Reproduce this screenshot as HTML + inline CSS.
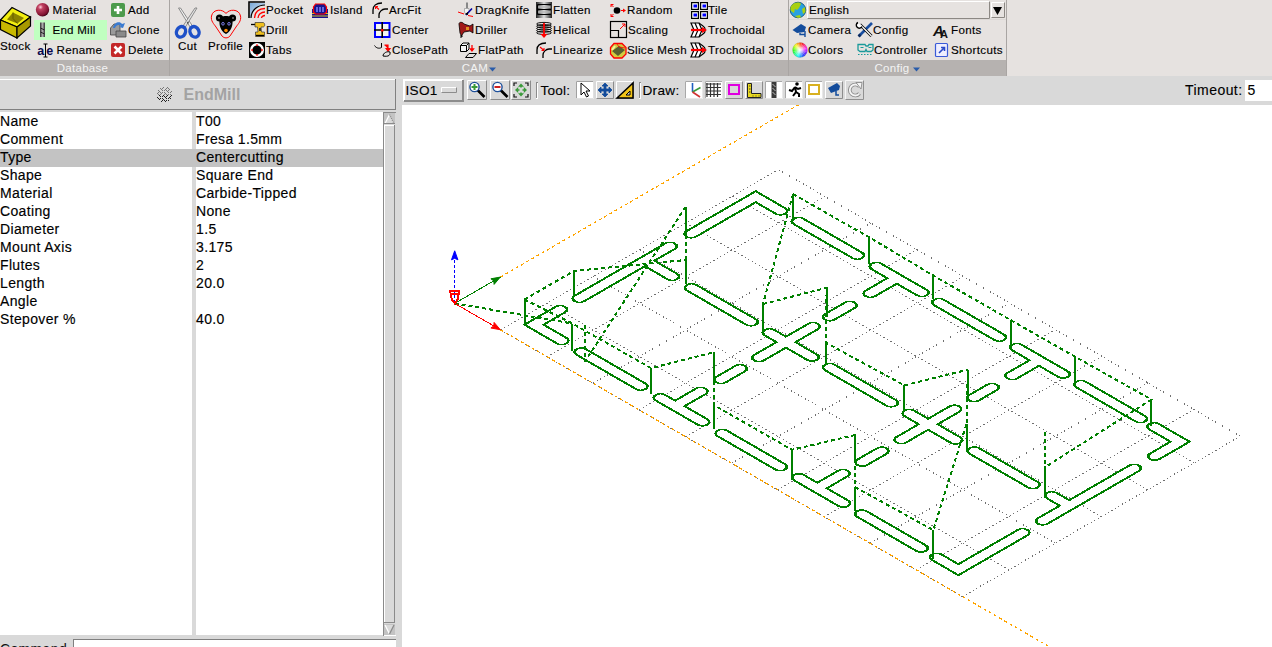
<!DOCTYPE html>
<html><head><meta charset="utf-8"><style>html,body{margin:0;padding:0;width:1272px;height:647px;overflow:hidden;background:#d9d9d9}</style></head>
<body><svg width="1272" height="647" viewBox="0 0 1272 647" font-family="Liberation Sans, sans-serif" style="position:absolute;left:0;top:0">
<rect x="0" y="0" width="1272" height="647" fill="#d9d9d9" />
<rect x="0" y="0" width="1007" height="76" fill="#e6e2e0" />
<rect x="1007" y="0" width="265" height="76" fill="#e6e2e0" />
<rect x="0" y="60" width="169" height="16" fill="#b6b2b0" />
<rect x="170" y="60" width="618" height="16" fill="#b6b2b0" />
<rect x="789" y="60" width="217" height="16" fill="#b6b2b0" />
<rect x="169" y="0" width="1" height="76" fill="#a9a5a3" />
<rect x="788" y="0" width="1" height="76" fill="#a9a5a3" />
<rect x="1006" y="0" width="1" height="76" fill="#a9a5a3" />
<text x="82.5" y="72" font-size="11.5" fill="#f4f4f4" font-weight="normal" letter-spacing="0.3" text-anchor="middle">Database</text>
<text x="475" y="72" font-size="11.5" fill="#f4f4f4" font-weight="normal" letter-spacing="0.3" text-anchor="middle">CAM</text>
<path d="M489 67.5h7l-3.5 4z" fill="#2a5caa"/>
<text x="892" y="72" font-size="11.5" fill="#f4f4f4" font-weight="normal" letter-spacing="0.3" text-anchor="middle">Config</text>
<path d="M913 67.5h7l-3.5 4z" fill="#2a5caa"/>
<rect x="34" y="20" width="73" height="20" fill="#c0ffc0" />
<text x="52.5" y="14" font-size="11.6" fill="#000" letter-spacing="0.32" stroke="#000" stroke-width="0.14">Material</text>
<text x="52.5" y="34" font-size="11.6" fill="#000" letter-spacing="0.22" stroke="#000" stroke-width="0.14">End Mill</text>
<text x="56.5" y="54" font-size="11.6" fill="#000" letter-spacing="0.32" stroke="#000" stroke-width="0.14">Rename</text>
<text x="128" y="14" font-size="11.6" fill="#000" letter-spacing="0.32" stroke="#000" stroke-width="0.14">Add</text>
<text x="128" y="34" font-size="11.6" fill="#000" letter-spacing="0.32" stroke="#000" stroke-width="0.14">Clone</text>
<text x="128" y="54" font-size="11.6" fill="#000" letter-spacing="0.32" stroke="#000" stroke-width="0.14">Delete</text>
<text x="0" y="50" font-size="11.6" fill="#000" letter-spacing="0.32" stroke="#000" stroke-width="0.14">Stock</text>
<text x="178" y="50" font-size="11.6" fill="#000" letter-spacing="0.32" stroke="#000" stroke-width="0.14">Cut</text>
<text x="208" y="50" font-size="11.6" fill="#000" letter-spacing="0.32" stroke="#000" stroke-width="0.14">Profile</text>
<text x="266" y="14" font-size="11.6" fill="#000" letter-spacing="0.32" stroke="#000" stroke-width="0.14">Pocket</text>
<text x="266" y="34" font-size="11.6" fill="#000" letter-spacing="0.32" stroke="#000" stroke-width="0.14">Drill</text>
<text x="266" y="54" font-size="11.6" fill="#000" letter-spacing="0.32" stroke="#000" stroke-width="0.14">Tabs</text>
<text x="330" y="14" font-size="11.6" fill="#000" letter-spacing="0.32" stroke="#000" stroke-width="0.14">Island</text>
<text x="389" y="14" font-size="11.6" fill="#000" letter-spacing="0.32" stroke="#000" stroke-width="0.14">ArcFit</text>
<text x="392" y="34" font-size="11.6" fill="#000" letter-spacing="0.32" stroke="#000" stroke-width="0.14">Center</text>
<text x="392" y="54" font-size="11.6" fill="#000" letter-spacing="0.32" stroke="#000" stroke-width="0.14">ClosePath</text>
<text x="475" y="14" font-size="11.6" fill="#000" letter-spacing="0.32" stroke="#000" stroke-width="0.14">DragKnife</text>
<text x="475" y="34" font-size="11.6" fill="#000" letter-spacing="0.32" stroke="#000" stroke-width="0.14">Driller</text>
<text x="478" y="54" font-size="11.6" fill="#000" letter-spacing="0.32" stroke="#000" stroke-width="0.14">FlatPath</text>
<text x="553" y="14" font-size="11.6" fill="#000" letter-spacing="0.32" stroke="#000" stroke-width="0.14">Flatten</text>
<text x="553" y="34" font-size="11.6" fill="#000" letter-spacing="0.32" stroke="#000" stroke-width="0.14">Helical</text>
<text x="553" y="54" font-size="11.6" fill="#000" letter-spacing="0.32" stroke="#000" stroke-width="0.14">Linearize</text>
<text x="627" y="14" font-size="11.6" fill="#000" letter-spacing="0.32" stroke="#000" stroke-width="0.14">Random</text>
<text x="628" y="34" font-size="11.6" fill="#000" letter-spacing="0.32" stroke="#000" stroke-width="0.14">Scaling</text>
<text x="627" y="54" font-size="11.6" fill="#000" letter-spacing="0.32" stroke="#000" stroke-width="0.14">Slice Mesh</text>
<text x="708" y="14" font-size="11.6" fill="#000" letter-spacing="0.32" stroke="#000" stroke-width="0.14">Tile</text>
<text x="708" y="34" font-size="11.6" fill="#000" letter-spacing="0.32" stroke="#000" stroke-width="0.14">Trochoidal</text>
<text x="708" y="54" font-size="11.6" fill="#000" letter-spacing="0.32" stroke="#000" stroke-width="0.14">Trochoidal 3D</text>
<text x="808" y="34" font-size="11.6" fill="#000" letter-spacing="0.32" stroke="#000" stroke-width="0.14">Camera</text>
<text x="873" y="34" font-size="11.6" fill="#000" letter-spacing="0.32" stroke="#000" stroke-width="0.14">Config</text>
<text x="951" y="34" font-size="11.6" fill="#000" letter-spacing="0.32" stroke="#000" stroke-width="0.14">Fonts</text>
<text x="808" y="54" font-size="11.6" fill="#000" letter-spacing="0.32" stroke="#000" stroke-width="0.14">Colors</text>
<text x="874" y="54" font-size="11.6" fill="#000" letter-spacing="0.32" stroke="#000" stroke-width="0.14">Controller</text>
<text x="951" y="54" font-size="11.6" fill="#000" letter-spacing="0.32" stroke="#000" stroke-width="0.14">Shortcuts</text>
<rect x="807" y="1" width="183" height="18" fill="#ffffff" opacity="0"/>
<rect x="807.5" y="1.5" width="182" height="17" fill="#e6e2e0" stroke="#ffffff" stroke-width="1"/>
<path d="M807.5 18.5V1.5H989.5" fill="none" stroke="#ffffff"/>
<path d="M807.5 18.5H989.5V1.5" fill="none" stroke="#8c8884"/>
<text x="809" y="14" font-size="11.6" fill="#000" letter-spacing="0.32" stroke="#000" stroke-width="0.14">English</text>
<rect x="991" y="2" width="14" height="16" fill="#e6e2e0"/><path d="M991.5,17.5V2.5H1004.5" stroke="#ffffff" fill="none"/><path d="M991.5,17.5H1004.5V2.5" stroke="#8c8884" fill="none"/>
<rect x="789" y="19" width="217" height="1" fill="#dcd8d6" />
<path d="M993 7h9l-4.5 8z" fill="#000"/>
<defs><radialGradient id="gball" cx="0.35" cy="0.3" r="0.75"><stop offset="0" stop-color="#ffd0dc"/><stop offset="0.25" stop-color="#c04060"/><stop offset="0.8" stop-color="#801030"/><stop offset="1" stop-color="#300010"/></radialGradient><linearGradient id="gbit" x1="0" x2="1"><stop offset="0" stop-color="#333"/><stop offset="0.5" stop-color="#aaa"/><stop offset="1" stop-color="#333"/></linearGradient><linearGradient id="gflat" x1="0" x2="1"><stop offset="0" stop-color="#222"/><stop offset="0.5" stop-color="#ddd"/><stop offset="1" stop-color="#222"/></linearGradient><radialGradient id="gcol" cx="0.5" cy="0.5" r="0.5"><stop offset="0" stop-color="#fff"/><stop offset="1" stop-color="#fff" stop-opacity="0"/></radialGradient><linearGradient id="gcol2" x1="0" y1="0" x2="1" y2="1"><stop offset="0" stop-color="#ff40ff"/><stop offset="0.3" stop-color="#4060ff"/><stop offset="0.55" stop-color="#40e0ff"/><stop offset="0.8" stop-color="#60ff40"/><stop offset="1" stop-color="#ffff40"/></linearGradient><linearGradient id="gpock" x1="0" y1="0" x2="1" y2="1"><stop offset="0" stop-color="#7aa8d8"/><stop offset="1" stop-color="#f0f4f8"/></linearGradient></defs>
<path d="M0.5,20L12,7.5L30.5,17L17,27Z" fill="#f2ee10" stroke="#000" stroke-width="1.2"/>
<path d="M0.5,20V29.5L17,38L17,27Z" fill="#c8b800" stroke="#000" stroke-width="1.2"/>
<path d="M17,27V38L30.5,26V17Z" fill="#a89800" stroke="#000" stroke-width="1.2"/>
<path d="M7,19.5L13,12.5L24,18L17.5,23.5Z" fill="#8a8000"/>
<path d="M13,12.5V18.5L17.5,23.5" stroke="#5a5400" stroke-width="0.8" fill="none"/>
<circle cx="42.5" cy="9.8" r="6.7" fill="url(#gball)"/>
<rect x="40" y="22.5" width="5" height="14.5" fill="url(#gbit)"/>
<path d="M40.5,28l4,2M40.5,32l4,2" stroke="#222" stroke-width="1"/>
<text x="37.3" y="54.5" font-size="12.5" font-weight="bold" fill="#0a0a50">a</text>
<text x="46.3" y="54.5" font-size="12.5" font-weight="bold" fill="#0a0a50">e</text>
<path d="M45.5,44V57M43.5,44H47.5M43.5,57H47.5" stroke="#000" stroke-width="1"/>
<rect x="111" y="3" width="14" height="14" rx="2" fill="#4c9a4c"/>
<path d="M118,6V14M114,10H122" stroke="#fff" stroke-width="2.6"/>
<rect x="111" y="43" width="14" height="14" rx="2" fill="#c42828"/>
<path d="M114.5,46.5L121.5,53.5M121.5,46.5L114.5,53.5" stroke="#fff" stroke-width="2.6"/>
<path d="M110.5,35V28L114,24H120V35Z" fill="#9a9a9a" stroke="#444" stroke-width="0.8"/>
<path d="M116,37V31H126V37Z" fill="#8a8a8a" stroke="#444" stroke-width="0.8"/>
<path d="M113,28C114,22 120,21 122,24L125,23L123,28L119,27L121,26C119,24 116,25 115,28Z" fill="#3a7ad0"/>
<path d="M178.5,8L180.5,8L193.5,27.5L191,28.5Z" fill="#f0f0f0" stroke="#808080" stroke-width="0.9"/>
<path d="M197,8L195,8L182,27.5L184.5,28.5Z" fill="#e4e4e4" stroke="#808080" stroke-width="0.9"/>
<circle cx="187.8" cy="22.8" r="1" fill="#555"/>
<ellipse cx="181" cy="31.8" rx="4.4" ry="5.4" transform="rotate(25 181 31.8)" fill="none" stroke="#1e50c8" stroke-width="3.4"/>
<ellipse cx="194.5" cy="31.8" rx="4.4" ry="5.4" transform="rotate(-25 194.5 31.8)" fill="none" stroke="#1e50c8" stroke-width="3.4"/>
<path d="M179,33l2,-4M192.5,29.5l2,4" stroke="#cfe0ff" stroke-width="1"/>
<path d="M226,13.5C223,9 213,8.5 211.5,16C210.5,21 214,24 216,27L222,36C224,38.5 228,38.5 230,36L236,27C238,24 241.5,21 240.5,16C239,8.5 229,9 226,13.5Z" fill="none" stroke="#ff0000" stroke-width="1"/>
<circle cx="219.5" cy="18" r="3.6" fill="#000"/><circle cx="232.5" cy="18" r="3.6" fill="#000"/>
<path d="M219.5,19C219,15 233,15 232.5,19C233,24 232,31 226,34C220,31 219,24 219.5,19Z" fill="#000"/>
<circle cx="219" cy="18" r="1" fill="#777"/><circle cx="233" cy="18" r="1" fill="#777"/>
<circle cx="223" cy="23.8" r="1.3" fill="none" stroke="#8a8aff" stroke-width="0.9"/><circle cx="229" cy="23.8" r="1.3" fill="none" stroke="#8a8aff" stroke-width="0.9"/>
<circle cx="226" cy="30.5" r="1.8" fill="#ff8800"/>
<path d="M249,18V2H265" stroke="#000" stroke-width="1.6" fill="none"/>
<path d="M250,18V3H265V5C258,5 251,10 251,18Z" fill="url(#gpock)"/>
<path d="M251,18C251,10 258,5 265,5" stroke="#000" stroke-width="1.2" fill="none"/>
<path d="M254.5,18C254.5,12 259,8.5 265,8.5M258,18C258,14.5 261,12 265,12M261.5,18C261.5,17 263,15.5 265,15.5" stroke="#ff0000" stroke-width="1.3" fill="none"/>
<path d="M251,24.5H255" stroke="#000" stroke-width="1.3"/>
<path d="M255,22.5H263C265,22.5 265.5,27 263,27H261L261.5,32H264.5V36.5H255.5V32H258L257.5,27H255Z" fill="#f0c020" stroke="#333" stroke-width="0.7"/>
<path d="M256,35.5H264" stroke="#000" stroke-width="1.4"/><path d="M259,28H261V31H259Z" fill="#333"/>
<rect x="249" y="42" width="16" height="16" fill="#000"/>
<circle cx="257" cy="50" r="5.8" fill="none" stroke="#fff" stroke-width="2.4"/>
<path d="M257,44.2V46M257,54V55.8M251.2,50H253M261,50H262.8" stroke="#ff0000" stroke-width="1.4"/>
<rect x="312" y="9" width="16" height="9" fill="#141490"/>
<path d="M312,13.5H328M312,16H328" stroke="#d4c020" stroke-width="1"/>
<path d="M315.5,4H324.5L326.5,7V12L324.5,14H315.5L313.5,12V7Z" fill="#141490" stroke="#ff0000" stroke-width="1.2"/>
<path d="M317,7V12M320,7V12M323,7V12" stroke="#8888ff" stroke-width="1.4"/>
<path d="M373,14V10C373,6 376,3 382,3" stroke="#000" stroke-width="1.3" fill="none"/>
<path d="M379,18V15C379,12 382,9 385,9H388" stroke="#000" stroke-width="1.3" fill="none"/>
<path d="M537,54V50C537,46 540,43 546,43" stroke="#000" stroke-width="1.3" fill="none"/>
<path d="M543,58V55C543,52 546,49 549,49H552" stroke="#000" stroke-width="1.3" fill="none"/>
<path d="M379,9.5L375.5,6.5M375.5,6.5h2.5M375.5,6.5v2.5" stroke="#ff0000" stroke-width="1.1" fill="none"/>
<path d="M540,47L544,50.5M544,50.5h-2.5M544,50.5v-2.5" stroke="#ff0000" stroke-width="1.1" fill="none"/>
<rect x="375" y="23" width="14.5" height="14" fill="#f4f4f0" stroke="#0000ff" stroke-width="2"/>
<path d="M382.2,22V38M374,30H390" stroke="#000" stroke-width="1.6"/>
<rect x="381" y="29" width="2.5" height="2.5" fill="#ff0000"/>
<path d="M374.5,45.5C376,48 379,49 381.5,47.5V43" stroke="#000" stroke-width="1" fill="none"/>
<path d="M384.5,45H388V49M386,48.5L388,51L390,48.5Z" stroke="#ff0000" stroke-width="1.2" fill="#ff0000"/>
<path d="M383,56C383,53 387,51 390,52C390.5,55 389,57 383,56Z" stroke="#000" stroke-width="1" fill="none"/>
<rect x="466" y="2.5" width="2" height="6" fill="#888"/><path d="M464.5,8.5H469V12L466,15L464.5,12Z" fill="#f4f4f4" stroke="#888" stroke-width="0.6"/>
<path d="M466,15L472,8.5" stroke="#0000a0" stroke-width="1.6"/><path d="M465,14L468,12L468,15Z" fill="#000"/>
<path d="M458,12L464,14M468,15.5L473,16.5" stroke="#ff0000" stroke-width="1" fill="none"/>
<path d="M459,24C459,21.5 463,22 464,24L470,26L473,24V33L470,31L464,32L462,35V37L461,35L460,33Z" fill="#a01818" stroke="#000" stroke-width="0.8"/>
<path d="M466,27h3v3h-3z" fill="#e09020"/><path d="M461,35V38" stroke="#000" stroke-width="1"/>
<path d="M460.5,45.5L463,43H469V49L466.5,51.5H460.5ZM460.5,45.5H466.5V51.5M466.5,45.5L469,43" stroke="#000" stroke-width="1" fill="#f4f4f4"/>
<path d="M472,45V50M470.5,49L472,51L473.5,49Z" stroke="#ff0000" stroke-width="1.3" fill="#ff0000"/>
<path d="M465.5,57.5L469,53.5H476.5L473,57.5Z" stroke="#000" stroke-width="1" fill="none"/>
<rect x="536" y="2" width="16" height="16" fill="url(#gflat)"/>
<path d="M537.5,4.5H551M537.5,9.5H551M537.5,14.5H551" stroke="#000" stroke-width="1.2"/>
<path d="M537.5,4.5V14.5" stroke="#000" stroke-width="1.2"/><path d="M538,7H550.5M538,12H550.5" stroke="#bbb" stroke-width="1.5"/>
<ellipse cx="544" cy="24.0" rx="7.5" ry="1.6" fill="none" stroke="#000" stroke-width="0.9"/>
<ellipse cx="544" cy="26.2" rx="7.5" ry="1.6" fill="none" stroke="#000" stroke-width="0.9"/>
<ellipse cx="544" cy="28.4" rx="7.5" ry="1.6" fill="none" stroke="#000" stroke-width="0.9"/>
<ellipse cx="544" cy="30.6" rx="7.5" ry="1.6" fill="none" stroke="#000" stroke-width="0.9"/>
<ellipse cx="544" cy="32.8" rx="7.5" ry="1.6" fill="none" stroke="#000" stroke-width="0.9"/>
<path d="M544,23V35" stroke="#ff0000" stroke-width="1.8"/><path d="M540.5,34L544,38L547.5,34Z" fill="#ff0000"/>
<circle cx="617" cy="10.5" r="3.3" fill="#000"/>
<path d="M613.5,7L611,4.5M611,4.5v2.5M611,4.5h2.5M613.5,14L611,16.5M611,16.5v-2.5M611,16.5h2.5M621,10.5H624" stroke="#ff0000" stroke-width="1" fill="none"/><path d="M623,8.5L626,10.5L623,12.5Z" fill="#ff0000"/>
<rect x="610.5" y="21.5" width="16" height="16" fill="none" stroke="#000" stroke-width="1.2"/>
<path d="M610.5,30.5H618.5V37.5" stroke="#000" stroke-width="1.2" fill="none"/>
<path d="M620,29L625,24M622,24H625V27" stroke="#ff0000" stroke-width="1" fill="none"/>
<path d="M614,43.5H622L626,47.5V54L622,58H614L610.5,54V47.5Z" fill="#d0cc40" stroke="#ff0000" stroke-width="1.3"/>
<path d="M612,51L618,56L625,50L619,46Z" fill="#5a6030"/><path d="M617,44L619,47L625,48" stroke="#ff0000" stroke-width="0.8" fill="none"/><path d="M615,46l-3,4" stroke="#f0f0a0" stroke-width="2"/>
<rect x="691.6" y="2.6" width="6.8" height="6.8" fill="#fff" stroke="#000" stroke-width="1.2"/><rect x="693.5" y="4.5" width="3.5" height="3" fill="#0000ff"/>
<rect x="700.6" y="2.6" width="6.8" height="6.8" fill="#fff" stroke="#000" stroke-width="1.2"/><rect x="702.5" y="4.5" width="3.5" height="3" fill="#0000ff"/>
<rect x="691.6" y="11.6" width="6.8" height="6.8" fill="#fff" stroke="#000" stroke-width="1.2"/><rect x="693.5" y="13.5" width="3.5" height="3" fill="#0000ff"/>
<rect x="700.6" y="11.6" width="6.8" height="6.8" fill="#fff" stroke="#000" stroke-width="1.2"/><rect x="702.5" y="13.5" width="3.5" height="3" fill="#0000ff"/>
<path d="M691,23H699L703,26C706,28 706,32 703,34L699,37H691L694,30Z" fill="#fff" stroke="#000" stroke-width="1.2"/>
<path d="M695,23L698,30L695,37M699,23L702,30L699,37" stroke="#000" stroke-width="1.2" fill="none"/>
<path d="M691,30H703" stroke="#ff0000" stroke-width="2.2"/><path d="M702,27L707,30L702,33Z" fill="#ff0000"/>
<path d="M691,43H699L703,46C706,48 706,52 703,54L699,57H691L694,50Z" fill="#fff" stroke="#000" stroke-width="1.2"/>
<path d="M695,43L698,50L695,57M699,43L702,50L699,57" stroke="#000" stroke-width="1.2" fill="none"/>
<path d="M691,50H703" stroke="#ff0000" stroke-width="2.2"/><path d="M702,47L707,50L702,53Z" fill="#ff0000"/>
<circle cx="798" cy="10" r="7.8" fill="#28a0e0" stroke="#0a4a70" stroke-width="0.8"/>
<path d="M792,5C795,2 800,2 801,4L799,8L797,10L795,9L794,13L791,11C790,9 790,7 792,5Z" fill="#a8d010"/><path d="M802,9L805,7L805.5,12L803,14Z" fill="#a8d010"/><path d="M795,16L800,15L801,17.5C799,18 797,18 795,16Z" fill="#a8d010"/>
<path d="M792.5,30L801,24L806,27L804.5,32L797,33Z" fill="#134c9c"/><path d="M800,33V34.5H805V31.5M805,31V37" stroke="#134c9c" stroke-width="1.4" fill="none"/>
<path d="M800,50L807.40,50.00A7.4,7.4 0 0 0 807.12,47.99Z" fill="#eb00ff"/>
<path d="M800,50L807.15,48.08A7.4,7.4 0 0 0 806.36,46.22Z" fill="#ff00d2"/>
<path d="M800,50L806.41,46.30A7.4,7.4 0 0 0 805.16,44.70Z" fill="#ff0092"/>
<path d="M800,50L805.23,44.77A7.4,7.4 0 0 0 803.62,43.54Z" fill="#ff0052"/>
<path d="M800,50L803.70,43.59A7.4,7.4 0 0 0 801.82,42.83Z" fill="#ff0013"/>
<path d="M800,50L801.92,42.85A7.4,7.4 0 0 0 799.90,42.60Z" fill="#ff2c00"/>
<path d="M800,50L800.00,42.60A7.4,7.4 0 0 0 797.99,42.88Z" fill="#ff6c00"/>
<path d="M800,50L798.08,42.85A7.4,7.4 0 0 0 796.22,43.64Z" fill="#ffac00"/>
<path d="M800,50L796.30,43.59A7.4,7.4 0 0 0 794.70,44.84Z" fill="#ffeb00"/>
<path d="M800,50L794.77,44.77A7.4,7.4 0 0 0 793.54,46.38Z" fill="#d2ff00"/>
<path d="M800,50L793.59,46.30A7.4,7.4 0 0 0 792.83,48.18Z" fill="#92ff00"/>
<path d="M800,50L792.85,48.08A7.4,7.4 0 0 0 792.60,50.10Z" fill="#52ff00"/>
<path d="M800,50L792.60,50.00A7.4,7.4 0 0 0 792.88,52.01Z" fill="#13ff00"/>
<path d="M800,50L792.85,51.92A7.4,7.4 0 0 0 793.64,53.78Z" fill="#00ff2c"/>
<path d="M800,50L793.59,53.70A7.4,7.4 0 0 0 794.84,55.30Z" fill="#00ff6c"/>
<path d="M800,50L794.77,55.23A7.4,7.4 0 0 0 796.38,56.46Z" fill="#00ffac"/>
<path d="M800,50L796.30,56.41A7.4,7.4 0 0 0 798.18,57.17Z" fill="#00ffeb"/>
<path d="M800,50L798.08,57.15A7.4,7.4 0 0 0 800.10,57.40Z" fill="#00d2ff"/>
<path d="M800,50L800.00,57.40A7.4,7.4 0 0 0 802.01,57.12Z" fill="#0092ff"/>
<path d="M800,50L801.92,57.15A7.4,7.4 0 0 0 803.78,56.36Z" fill="#0052ff"/>
<path d="M800,50L803.70,56.41A7.4,7.4 0 0 0 805.30,55.16Z" fill="#0013ff"/>
<path d="M800,50L805.23,55.23A7.4,7.4 0 0 0 806.46,53.62Z" fill="#2c00ff"/>
<path d="M800,50L806.41,53.70A7.4,7.4 0 0 0 807.17,51.82Z" fill="#6c00ff"/>
<path d="M800,50L807.15,51.92A7.4,7.4 0 0 0 807.40,49.90Z" fill="#ac00ff"/>
<circle cx="800" cy="50" r="7.4" fill="url(#gcol)"/>
<circle cx="800" cy="50" r="7.4" fill="none" stroke="#999" stroke-width="0.3"/>
<path d="M859,36L872,23" stroke="#1a4ea0" stroke-width="2.6"/><path d="M858.5,36.5l2,-2" stroke="#0a2a60" stroke-width="2.6"/>
<path d="M860,24.5L871.5,36" stroke="#000" stroke-width="2.8"/><path d="M860,24.5L871.5,36" stroke="#fff" stroke-width="1.2"/>
<path d="M858,22.5a3,3 0 1 0 4,4" stroke="#000" stroke-width="1.4" fill="#fff"/>
<text x="933" y="36" font-size="15" font-weight="bold" fill="#111" font-style="italic">A</text>
<text x="940" y="38" font-size="11" font-weight="bold" fill="#111">A</text>
<path d="M858,44.5H865L866,46H868L869,44.5H873V50L871,51.5H867L866,49.5L865,51.5H860L858,50Z" fill="none" stroke="#1a9a9a" stroke-width="1.3"/>
<path d="M860.5,47.5h3M868.5,47.5h3" stroke="#1a9a9a" stroke-width="1"/><path d="M858,54.5H873" stroke="#1a9a9a" stroke-width="1" stroke-dasharray="1.5,1.5"/>
<rect x="935.5" y="43.5" width="12" height="13" rx="1" fill="#eef" stroke="#3a5ad8" stroke-width="1.2"/>
<path d="M939,53L944.5,47.5M941,47.5H944.5V51" stroke="#2a4ac8" stroke-width="1.6" fill="none"/>
<rect x="0" y="79" width="396" height="1" fill="#ffffff" />
<rect x="0" y="80" width="395" height="29" fill="#d9d9d9" />
<rect x="395" y="79" width="1" height="31" fill="#808080" />
<rect x="0" y="109" width="396" height="1" fill="#808080" />
<text x="183.5" y="100" font-size="16" fill="#a3a3a3" font-weight="bold" text-anchor="start">EndMill</text>
<rect x="157" y="93" width="1" height="1" fill="#777"/><rect x="157" y="97" width="1" height="1" fill="#222"/><rect x="158" y="90" width="1" height="1" fill="#777"/><rect x="158" y="92" width="1" height="1" fill="#777"/><rect x="158" y="94" width="1" height="1" fill="#777"/><rect x="158" y="98" width="1" height="1" fill="#222"/><rect x="159" y="91" width="1" height="1" fill="#777"/><rect x="159" y="95" width="1" height="1" fill="#222"/><rect x="159" y="99" width="1" height="1" fill="#222"/><rect x="160" y="88" width="1" height="1" fill="#777"/><rect x="160" y="92" width="1" height="1" fill="#777"/><rect x="160" y="94" width="1" height="1" fill="#777"/><rect x="160" y="96" width="1" height="1" fill="#222"/><rect x="160" y="98" width="1" height="1" fill="#222"/><rect x="161" y="89" width="1" height="1" fill="#777"/><rect x="161" y="93" width="1" height="1" fill="#777"/><rect x="161" y="101" width="1" height="1" fill="#222"/><rect x="162" y="88" width="1" height="1" fill="#777"/><rect x="162" y="90" width="1" height="1" fill="#777"/><rect x="162" y="92" width="1" height="1" fill="#777"/><rect x="162" y="96" width="1" height="1" fill="#222"/><rect x="162" y="98" width="1" height="1" fill="#222"/><rect x="162" y="100" width="1" height="1" fill="#222"/><rect x="163" y="87" width="1" height="1" fill="#777"/><rect x="163" y="95" width="1" height="1" fill="#222"/><rect x="163" y="99" width="1" height="1" fill="#222"/><rect x="164" y="90" width="1" height="1" fill="#777"/><rect x="164" y="92" width="1" height="1" fill="#777"/><rect x="164" y="94" width="1" height="1" fill="#777"/><rect x="164" y="96" width="1" height="1" fill="#222"/><rect x="164" y="100" width="1" height="1" fill="#222"/><rect x="165" y="89" width="1" height="1" fill="#777"/><rect x="165" y="93" width="1" height="1" fill="#777"/><rect x="165" y="97" width="1" height="1" fill="#222"/><rect x="165" y="101" width="1" height="1" fill="#222"/><rect x="166" y="88" width="1" height="1" fill="#777"/><rect x="166" y="90" width="1" height="1" fill="#777"/><rect x="166" y="94" width="1" height="1" fill="#777"/><rect x="166" y="96" width="1" height="1" fill="#222"/><rect x="166" y="98" width="1" height="1" fill="#222"/><rect x="166" y="100" width="1" height="1" fill="#222"/><rect x="167" y="87" width="1" height="1" fill="#777"/><rect x="167" y="91" width="1" height="1" fill="#777"/><rect x="167" y="95" width="1" height="1" fill="#222"/><rect x="168" y="88" width="1" height="1" fill="#777"/><rect x="168" y="90" width="1" height="1" fill="#777"/><rect x="168" y="92" width="1" height="1" fill="#777"/><rect x="168" y="94" width="1" height="1" fill="#777"/><rect x="168" y="98" width="1" height="1" fill="#222"/><rect x="168" y="100" width="1" height="1" fill="#222"/><rect x="169" y="89" width="1" height="1" fill="#777"/><rect x="169" y="97" width="1" height="1" fill="#222"/><rect x="170" y="92" width="1" height="1" fill="#777"/><rect x="170" y="94" width="1" height="1" fill="#777"/><rect x="170" y="96" width="1" height="1" fill="#222"/><rect x="170" y="98" width="1" height="1" fill="#222"/><rect x="171" y="91" width="1" height="1" fill="#777"/><rect x="171" y="95" width="1" height="1" fill="#222"/>
<rect x="0" y="112" width="383" height="523" fill="#ffffff" />
<rect x="192" y="112" width="4" height="523" fill="#d9d9d9" />
<rect x="0" y="149" width="383" height="18" fill="#c3c3c3" />
<text x="0" y="125.8" font-size="14" fill="#000" font-weight="normal" letter-spacing="0.35" stroke="#000" stroke-width="0.15" text-anchor="start">Name</text>
<text x="196" y="125.8" font-size="14" fill="#000" font-weight="normal" letter-spacing="0.35" stroke="#000" stroke-width="0.15" text-anchor="start">T00</text>
<text x="0" y="143.8" font-size="14" fill="#000" font-weight="normal" letter-spacing="0.35" stroke="#000" stroke-width="0.15" text-anchor="start">Comment</text>
<text x="196" y="143.8" font-size="14" fill="#000" font-weight="normal" letter-spacing="0.35" stroke="#000" stroke-width="0.15" text-anchor="start">Fresa 1.5mm</text>
<text x="0" y="161.8" font-size="14" fill="#000" font-weight="normal" letter-spacing="0.35" stroke="#000" stroke-width="0.15" text-anchor="start">Type</text>
<text x="196" y="161.8" font-size="14" fill="#000" font-weight="normal" letter-spacing="0.35" stroke="#000" stroke-width="0.15" text-anchor="start">Centercutting</text>
<text x="0" y="179.8" font-size="14" fill="#000" font-weight="normal" letter-spacing="0.35" stroke="#000" stroke-width="0.15" text-anchor="start">Shape</text>
<text x="196" y="179.8" font-size="14" fill="#000" font-weight="normal" letter-spacing="0.35" stroke="#000" stroke-width="0.15" text-anchor="start">Square End</text>
<text x="0" y="197.8" font-size="14" fill="#000" font-weight="normal" letter-spacing="0.35" stroke="#000" stroke-width="0.15" text-anchor="start">Material</text>
<text x="196" y="197.8" font-size="14" fill="#000" font-weight="normal" letter-spacing="0.35" stroke="#000" stroke-width="0.15" text-anchor="start">Carbide-Tipped</text>
<text x="0" y="215.8" font-size="14" fill="#000" font-weight="normal" letter-spacing="0.35" stroke="#000" stroke-width="0.15" text-anchor="start">Coating</text>
<text x="196" y="215.8" font-size="14" fill="#000" font-weight="normal" letter-spacing="0.35" stroke="#000" stroke-width="0.15" text-anchor="start">None</text>
<text x="0" y="233.8" font-size="14" fill="#000" font-weight="normal" letter-spacing="0.35" stroke="#000" stroke-width="0.15" text-anchor="start">Diameter</text>
<text x="196" y="233.8" font-size="14" fill="#000" font-weight="normal" letter-spacing="0.35" stroke="#000" stroke-width="0.15" text-anchor="start">1.5</text>
<text x="0" y="251.8" font-size="14" fill="#000" font-weight="normal" letter-spacing="0.35" stroke="#000" stroke-width="0.15" text-anchor="start">Mount Axis</text>
<text x="196" y="251.8" font-size="14" fill="#000" font-weight="normal" letter-spacing="0.35" stroke="#000" stroke-width="0.15" text-anchor="start">3.175</text>
<text x="0" y="269.8" font-size="14" fill="#000" font-weight="normal" letter-spacing="0.35" stroke="#000" stroke-width="0.15" text-anchor="start">Flutes</text>
<text x="196" y="269.8" font-size="14" fill="#000" font-weight="normal" letter-spacing="0.35" stroke="#000" stroke-width="0.15" text-anchor="start">2</text>
<text x="0" y="287.8" font-size="14" fill="#000" font-weight="normal" letter-spacing="0.35" stroke="#000" stroke-width="0.15" text-anchor="start">Length</text>
<text x="196" y="287.8" font-size="14" fill="#000" font-weight="normal" letter-spacing="0.35" stroke="#000" stroke-width="0.15" text-anchor="start">20.0</text>
<text x="0" y="305.8" font-size="14" fill="#000" font-weight="normal" letter-spacing="0.35" stroke="#000" stroke-width="0.15" text-anchor="start">Angle</text>
<text x="0" y="323.8" font-size="14" fill="#000" font-weight="normal" letter-spacing="0.35" stroke="#000" stroke-width="0.15" text-anchor="start">Stepover %</text>
<text x="196" y="323.8" font-size="14" fill="#000" font-weight="normal" letter-spacing="0.35" stroke="#000" stroke-width="0.15" text-anchor="start">40.0</text>
<rect x="383" y="112" width="13" height="523" fill="#d9d9d9" />
<rect x="383" y="112" width="1" height="524" fill="#8a8a8a" />
<rect x="383" y="112" width="13" height="1" fill="#8a8a8a" />
<rect x="384" y="113" width="11" height="11" fill="#c3c3c3" />
<path d="M385,123.5L389.5,114.5L394,123.5" fill="#d9d9d9" stroke="none"/>
<path d="M385,123.5L389.5,114.5" stroke="#ffffff" stroke-width="1.2"/><path d="M389.5,114.5L394,123.5" stroke="#8a8a8a" stroke-width="1.2" stroke-dasharray="1,1"/>
<rect x="384" y="123" width="11" height="1" fill="#8a8a8a" />
<rect x="384" y="125" width="11" height="498" fill="#d9d9d9" />
<rect x="384" y="125" width="1" height="498" fill="#ffffff" />
<rect x="384" y="125" width="11" height="1" fill="#ffffff" />
<rect x="394" y="125" width="1" height="498" fill="#8a8a8a" />
<rect x="384" y="622" width="11" height="1" fill="#8a8a8a" />
<rect x="384" y="624" width="11" height="11" fill="#c3c3c3" />
<path d="M385,625L389.5,634L394,625Z" fill="#d9d9d9"/>
<path d="M385,625L389.5,634" stroke="#ffffff" stroke-width="1.2"/><path d="M389.5,634L394,625" stroke="#8a8a8a" stroke-width="1.2"/>
<rect x="384" y="635" width="12" height="1" fill="#ffffff" />
<rect x="73" y="639" width="323" height="8" fill="#ffffff" />
<rect x="73" y="639" width="323" height="1" fill="#808080" />
<rect x="73" y="639" width="1" height="8" fill="#808080" />
<text x="0" y="654" font-size="14" fill="#111" font-weight="normal" letter-spacing="0.35" text-anchor="start">Command</text>
<rect x="403" y="79" width="61" height="23" fill="#d9d9d9"/>
<path d="M404,101V80H463" stroke="#ffffff" stroke-width="2" fill="none"/>
<path d="M404,101H463V80" stroke="#8c8c8c" stroke-width="2" fill="none"/>
<path d="M403,102H464V79" stroke="#8c8c8c" stroke-width="0" fill="none"/>
<text x="405.5" y="95" font-size="13.6" fill="#000" stroke="#000" stroke-width="0.12" letter-spacing="0.3">ISO1</text>
<rect x="441" y="87" width="16" height="6" fill="#d9d9d9"/><path d="M441.5,92.5V87.5H456.5" stroke="#ffffff" fill="none"/><path d="M441.5,92.5H456.5V87.5" stroke="#8c8c8c" fill="none"/>
<rect x="467" y="80" width="20" height="20" fill="#d9d9d9"/><path d="M467.5,99.5V80.5H486.5" stroke="#ffffff" fill="none"/><path d="M467.5,99.5H486.5V80.5" stroke="#8c8c8c" fill="none"/>
<rect x="490" y="80" width="20" height="20" fill="#d9d9d9"/><path d="M490.5,99.5V80.5H509.5" stroke="#ffffff" fill="none"/><path d="M490.5,99.5H509.5V80.5" stroke="#8c8c8c" fill="none"/>
<rect x="511" y="80" width="20" height="20" fill="#d9d9d9"/><path d="M511.5,99.5V80.5H530.5" stroke="#ffffff" fill="none"/><path d="M511.5,99.5H530.5V80.5" stroke="#8c8c8c" fill="none"/>
<path d="M477.5,90L484.5,97" stroke="#000" stroke-width="2.6"/>
<circle cx="474.5" cy="87" r="4.6" fill="#ffffff" stroke="#1d4f9a" stroke-width="1.4"/>
<path d="M471.5,87H477.5M474.5,84V90" stroke="#3a9a3a" stroke-width="2"/>
<path d="M500.5,90L507.5,97" stroke="#000" stroke-width="2.6"/>
<circle cx="497.5" cy="87" r="4.6" fill="#ffffff" stroke="#1d4f9a" stroke-width="1.4"/>
<path d="M494.5,87H500.5" stroke="#cc2020" stroke-width="2"/>
<path d="M514,86V83H517M525,83H528V86M528,94V97H525M517,97H514V94" stroke="#111" stroke-width="1.2" fill="none"/>
<path d="M521,83.5l-3,3.2h6zM521,96.5l-3,-3.2h6zM515,90l3.2,-3v6zM527,90l-3.2,-3v6z" fill="#3a9a3a"/><path d="M521,86v1.5M521,92.5v1.5M518,90h1.5M522.5,90h1.5" stroke="#3a9a3a" stroke-width="1.6"/>
<path d="M521,86v8M517.5,90h7" stroke="#3a9a3a" stroke-width="0"/>
<rect x="536" y="82" width="1" height="17" fill="#8c8c8c"/><rect x="537" y="83" width="1" height="15" fill="#ffffff"/><rect x="536" y="82" width="2" height="1" fill="#8c8c8c"/><rect x="536" y="98" width="2" height="1" fill="#ffffff"/>
<text x="540.5" y="95" font-size="13.6" fill="#000" stroke="#000" stroke-width="0.12" letter-spacing="0.2">Tool:</text>
<rect x="576" y="81" width="18" height="18" fill="#ffffff"/>
<path d="M576.5,98.5V81.5H593.5" stroke="#a0a0a0" fill="none"/><path d="M576.5,98.5H593.5V81.5" stroke="#e0e0e0" fill="none"/>
<path d="M581,83V95l3,-3l2.5,5l2,-1l-2.5,-5h4z" fill="#fff" stroke="#000" stroke-width="1"/>
<rect x="596" y="81" width="18" height="18" fill="#d9d9d9"/><path d="M596.5,98.5V81.5H613.5" stroke="#ffffff" fill="none"/><path d="M596.5,98.5H613.5V81.5" stroke="#8c8c8c" fill="none"/>
<path d="M605,83l-3,3h2v3h-3v-2l-3,3l3,3v-2h3v3h-2l3,3l3,-3h-2v-3h3v2l3,-3l-3,-3v2h-3v-3h2z" fill="#134c9c" stroke="#134c9c" stroke-width="0.8"/>
<rect x="616" y="81" width="18" height="18" fill="#d9d9d9"/><path d="M616.5,98.5V81.5H633.5" stroke="#ffffff" fill="none"/><path d="M616.5,98.5H633.5V81.5" stroke="#8c8c8c" fill="none"/>
<path d="M617,98L633,83V98Z" fill="#f2c418" stroke="#000" stroke-width="1.5"/><path d="M626,95L630,91V95Z" fill="#d9d9d9" stroke="#000" stroke-width="1"/>
<rect x="639" y="82" width="1" height="17" fill="#8c8c8c"/><rect x="640" y="83" width="1" height="15" fill="#ffffff"/><rect x="639" y="82" width="2" height="1" fill="#8c8c8c"/><rect x="639" y="98" width="2" height="1" fill="#ffffff"/>
<text x="642.5" y="95" font-size="13.6" fill="#000" stroke="#000" stroke-width="0.12" letter-spacing="0.3">Draw:</text>
<rect x="685" y="81" width="18" height="18" fill="#ffffff"/>
<path d="M685.5,98.5V81.5H702.5" stroke="#a8a8a8" fill="none"/><path d="M685.5,98.5H702.5V81.5" stroke="#e8e8e8" fill="none"/>
<rect x="705" y="81" width="18" height="18" fill="#ffffff"/>
<path d="M705.5,98.5V81.5H722.5" stroke="#a8a8a8" fill="none"/><path d="M705.5,98.5H722.5V81.5" stroke="#e8e8e8" fill="none"/>
<rect x="725" y="81" width="18" height="18" fill="#d9d9d9"/><path d="M725.5,98.5V81.5H742.5" stroke="#ffffff" fill="none"/><path d="M725.5,98.5H742.5V81.5" stroke="#8c8c8c" fill="none"/>
<rect x="745" y="81" width="18" height="18" fill="#d9d9d9"/><path d="M745.5,98.5V81.5H762.5" stroke="#ffffff" fill="none"/><path d="M745.5,98.5H762.5V81.5" stroke="#8c8c8c" fill="none"/>
<rect x="765" y="81" width="18" height="18" fill="#ffffff"/>
<path d="M765.5,98.5V81.5H782.5" stroke="#a8a8a8" fill="none"/><path d="M765.5,98.5H782.5V81.5" stroke="#e8e8e8" fill="none"/>
<rect x="785" y="81" width="18" height="18" fill="#ffffff"/>
<path d="M785.5,98.5V81.5H802.5" stroke="#a8a8a8" fill="none"/><path d="M785.5,98.5H802.5V81.5" stroke="#e8e8e8" fill="none"/>
<rect x="805" y="81" width="18" height="18" fill="#ffffff"/>
<path d="M805.5,98.5V81.5H822.5" stroke="#a8a8a8" fill="none"/><path d="M805.5,98.5H822.5V81.5" stroke="#e8e8e8" fill="none"/>
<rect x="825" y="81" width="18" height="18" fill="#d9d9d9"/><path d="M825.5,98.5V81.5H842.5" stroke="#ffffff" fill="none"/><path d="M825.5,98.5H842.5V81.5" stroke="#8c8c8c" fill="none"/>
<path d="M692.5,92V83" stroke="#1f5fc0" stroke-width="1.6"/><path d="M692.5,92L700.5,87.5" stroke="#3a9a3a" stroke-width="1.6"/><path d="M692.5,92L700,97" stroke="#d03030" stroke-width="1.6"/>
<path d="M707.0,83V97M706,84.0H721M710.5,83V97M706,87.5H721M714.0,83V97M706,91.0H721M717.5,83V97M706,94.5H721" stroke="#333" stroke-width="1.2" fill="none"/>
<rect x="729" y="85" width="10" height="9" fill="none" stroke="#e000e0" stroke-width="2"/>
<path d="M747.5,83.5h4v10h9.5v4h-13.5z" fill="#e8d820" stroke="#222" stroke-width="1"/><path d="M749,86h1.5M749,89h1.5M749,92h1.5M753,95.5v1M756,95.5v1M759,95.5v1" stroke="#222" stroke-width="0.8"/>
<path d="M771.5,82h5v16h-5z" fill="#3a3a3a"/><path d="M772.5,84l3,3M772.5,88l3,3M772.5,92l3,3" stroke="#bbb" stroke-width="1"/>
<circle cx="797" cy="84" r="1.8" fill="#000"/><path d="M795,87l-3,4l-3,-1M795,87l1,5l-3,4M796,92l3,2v3M795,87l3,2l3,-1" stroke="#000" stroke-width="2" fill="none"/>
<rect x="809" y="85" width="10" height="9" fill="none" stroke="#d8b020" stroke-width="2"/>
<path d="M828,88l9,-5l3,3l-1,4l-8,3z" fill="#134c9c"/><path d="M836,91v4h3" stroke="#134c9c" stroke-width="1.5" fill="none"/>
<rect x="845" y="80" width="19" height="20" fill="#d9d9d9"/><path d="M845.5,99.5V80.5H863.5" stroke="#f5f5f5" fill="none"/><path d="M845.5,99.5H863.5V80.5" stroke="#909090" fill="none"/>
<path d="M859.5,86.5a5.5,5.5 0 1 0 0,7" stroke="#8a8a8a" stroke-width="3.6" fill="none"/><path d="M859.5,86.5a5.5,5.5 0 1 0 0,7" stroke="#f4f4f4" stroke-width="1.8" fill="none"/>
<path d="M856,82.5L862,82.5L861,89Z" fill="#f4f4f4" stroke="#8a8a8a" stroke-width="0.9"/>
<text x="1185" y="95" font-size="14" fill="#000" stroke="#000" stroke-width="0.12" letter-spacing="0.45">Timeout:</text>
<rect x="1245" y="80" width="27" height="21" fill="#ffffff"/>
<text x="1247.5" y="95" font-size="14" fill="#000" stroke="#000" stroke-width="0.12">5</text><rect x="402" y="105" width="870" height="542" fill="#ffffff"/>
<svg x="402" y="105" width="870" height="542" viewBox="402 105 870 542" overflow="hidden" shape-rendering="crispEdges">
<path d="M500.9,330.0L778.6,169.7M547.0,356.7L824.8,196.3M593.2,383.3L870.9,223.0M639.3,410.0L917.1,249.6M685.5,436.6L963.2,276.3M731.7,463.3L1009.4,302.9M777.8,489.9L1055.5,329.6M824.0,516.6L1101.7,356.2M870.1,543.2L1147.9,382.9M916.3,569.9L1194.0,409.5M962.5,596.5L1240.2,436.2M500.9,330.0L962.5,596.5M547.1,303.3L1008.7,569.8M593.4,276.6L1055.0,543.1M639.7,249.9L1101.3,516.4M686.0,223.1L1147.6,489.6M732.3,196.4L1193.9,462.9M778.6,169.7L1240.2,436.2" stroke="#707070" stroke-width="1.1" stroke-dasharray="1.2,2.8" fill="none"/>
<path d="M500.3,277.1 L798.3,105" stroke="#ffa500" stroke-width="1.2" stroke-dasharray="3,3" fill="none"/>
<path d="M500.3,329.7 L1049.8,647" stroke="#ffa500" stroke-width="1.2" stroke-dasharray="3,3" fill="none"/>
<g transform="matrix(0.8660254,0.5,0.8660254,-0.5,524.5,324.7)" fill="none" stroke-linecap="round" stroke-linejoin="miter" stroke-miterlimit="10">
<path d="M5.50,35.80L5.50,5.50L37.30,5.50M5.50,187.00L5.50,261.50L34.10,261.50M495.50,79.70L495.50,5.50L470.50,5.50M495.50,232.40L495.50,261.50L465.50,261.50M5.50,58.00L5.50,162.50M168.40,5.50L168.40,35.10M168.40,58.50L168.40,80.60M168.40,102.30L168.40,164.70M168.40,184.00L168.40,207.30M168.40,231.00L168.40,261.50M332.60,5.50L332.60,35.20M332.60,57.50L332.60,80.00M332.60,102.50L332.60,163.90M332.60,186.50L332.60,207.30M332.60,230.50L332.60,261.50M495.50,102.90L495.50,208.40M60.00,5.50L128.70,5.50M151.50,5.50L200.00,5.50M223.00,5.50L289.70,5.50M311.50,5.50L362.60,5.50M384.00,5.50L452.30,5.50M5.50,133.50L37.10,133.50M59.50,133.50L128.00,133.50M149.50,133.50L198.50,133.50M219.00,133.50L289.90,133.50M311.00,133.50L364.20,133.50M386.00,133.50L453.60,133.50M475.50,133.50L495.50,133.50M55.00,261.50L122.80,261.50M145.00,261.50L197.30,261.50M217.00,261.50L286.80,261.50M307.00,261.50L360.30,261.50M381.00,261.50L449.50,261.50" stroke="#008000" stroke-width="13.3"/>
<path d="M5.50,35.80L5.50,5.50L37.30,5.50M5.50,187.00L5.50,261.50L34.10,261.50M495.50,79.70L495.50,5.50L470.50,5.50M495.50,232.40L495.50,261.50L465.50,261.50M5.50,58.00L5.50,162.50M168.40,5.50L168.40,35.10M168.40,58.50L168.40,80.60M168.40,102.30L168.40,164.70M168.40,184.00L168.40,207.30M168.40,231.00L168.40,261.50M332.60,5.50L332.60,35.20M332.60,57.50L332.60,80.00M332.60,102.50L332.60,163.90M332.60,186.50L332.60,207.30M332.60,230.50L332.60,261.50M495.50,102.90L495.50,208.40M60.00,5.50L128.70,5.50M151.50,5.50L200.00,5.50M223.00,5.50L289.70,5.50M311.50,5.50L362.60,5.50M384.00,5.50L452.30,5.50M5.50,133.50L37.10,133.50M59.50,133.50L128.00,133.50M149.50,133.50L198.50,133.50M219.00,133.50L289.90,133.50M311.00,133.50L364.20,133.50M386.00,133.50L453.60,133.50M475.50,133.50L495.50,133.50M55.00,261.50L122.80,261.50M145.00,261.50L197.30,261.50M217.00,261.50L286.80,261.50M307.00,261.50L360.30,261.50M381.00,261.50L449.50,261.50" stroke="#ffffff" stroke-width="8.7"/>
</g>
<path d="M524.5,299.5V325.2M573.9,271V296.8M685.7,260V284.3M685.7,206.7V234.5M793,194V218.7M869.4,237.4V264M933.4,275.6V299.4M1010.5,320V344.9M1075,356.7V381.6M1151.4,399.5V426.3M572.3,323.5V350.7M651.1,368.2V394.2M714.2,352.1V379.3M714.2,405.3V428.8M792,449.8V475.7M855.1,435V462.7M855.1,487.1V511.4M933.3,530.1V559M763,304V330.3M826.6,287.8V317.3M826,342.8V365M904.4,385.4V410.3M967.8,369.7V396.9M966.5,424V450M1045,466.2V494.2" stroke="#008000" stroke-width="2" fill="none"/>
<path d="M454.7,303.4L572.3,323.5M524.5,299.5L573.9,271L685.7,260M685.7,206.7L685.7,260M685.7,206.7L586,360M584.7,324.7L584.7,361.8M524.5,299.5L572.3,323.5L651.1,368.2L714.2,352.1L714.2,405.3L792,449.8L855.1,435L855.1,487.1L933.3,530.1L966.5,424M967.8,369.7L966.5,424M763,304L826.6,287.8L826,342.8L904.4,385.4L967.8,369.7M793,194L763,304M793,194L869.4,237.4L933.4,275.6L1010.5,320L1075,356.7L1151.4,399.5L1046.7,466.2M1045,431.6L1045,466.2" stroke="#008000" stroke-width="2" stroke-dasharray="4,3" fill="none"/>
<path d="M454.7,303.4 L500.3,277.1" stroke="#008000" stroke-width="1"/>
<path d="M454.7,303.4 L500.3,329.7" stroke="#ff0000" stroke-width="1"/>
<path d="M454.7,303.4 L454.7,257.4" stroke="#0000ff" stroke-width="1.2" stroke-dasharray="3,2"/>
<path d="M500.3,277.1L494.1,284.4L493.8,280.9L490.9,278.8Z" fill="#008000" stroke="#008000" stroke-width="1" shape-rendering="geometricPrecision"/>
<path d="M500.3,329.7L490.9,328.0L493.8,325.9L494.1,322.4Z" fill="#ff0000" stroke="#ff0000" stroke-width="1" shape-rendering="geometricPrecision"/>
<path d="M454.7,250.8L457.9,259.8L454.7,258.3L451.5,259.8Z" fill="#0000ff" stroke="#0000ff" stroke-width="1" shape-rendering="geometricPrecision"/>
<path d="M450.2,290.9 L459.2,290.9 L457.7,299.4 L454.7,303.4 L451.7,299.4 Z" fill="none" stroke="#ff0000" stroke-width="2"/>
<path d="M451.7,293.9 H457.7" stroke="#ff0000" stroke-width="1.2"/>
</svg>
</svg></body></html>
